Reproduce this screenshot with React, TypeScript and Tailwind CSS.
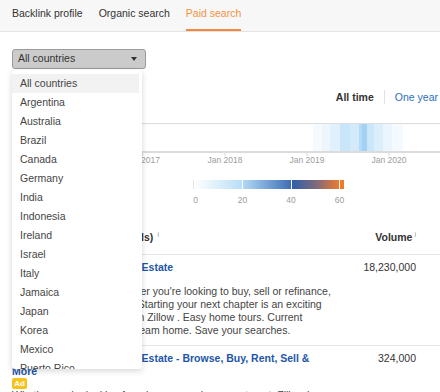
const tabs = ["Backlink profile", "Organic search", "Paid search"];

const countries = [
  "All countries",
  "Argentina",
  "Australia",
  "Brazil",
  "Canada",
  "Germany",
  "India",
  "Indonesia",
  "Ireland",
  "Israel",
  "Italy",
  "Jamaica",
  "Japan",
  "Korea",
  "Mexico",
  "Puerto Rico",
  "Spain",
  "United Kingdom",
];

// heatmap stripes: [x1, x2, colour], page coordinates
const stripes: [number, number, string][] = [
  [313, 322, "#f5fafe"],
  [322, 330, "#edf6fd"],
  [330, 340, "#e0f0fc"],
  [340, 350, "#c9e5f9"],
  [350, 359, "#d3eafa"],
  [359, 362, "#b3daf6"],
  [362, 367, "#a2d1f3"],
  [367, 374, "#cbe6f9"],
  [374, 383, "#dbeefb"],
  [383, 392, "#eaf5fd"],
  [392, 403, "#f5fafe"],
];

const years = [
  { x: 142.5, label: "Jan 2017" },
  { x: 225, label: "Jan 2018" },
  { x: 307, label: "Jan 2019" },
  { x: 389, label: "Jan 2020" },
];

function AdBadge() {
  return (
    <div className="flex h-[11px] w-[15px] items-center justify-center rounded-[2px] bg-[#f6c21c] text-[8px] font-bold leading-none text-white">
      Ad
    </div>
  );
}

export default function App() {
  return (
    <div className="relative h-[392px] w-[440px] overflow-hidden bg-white font-['Liberation_Sans',Arial,sans-serif] text-[#333]">
      <div className="flex h-[32px] gap-4 border-b border-[#e4e4e4] bg-[#f7f7f7] px-3 text-[10.5px]">
        {tabs.map((t) => (
          <div
            key={t}
            className={
              t === "Paid search"
                ? "h-[31px] border-b-2 border-[#f5883a] pt-[6px] leading-[14px] text-[#f5923e]"
                : "h-[31px] border-b-2 border-transparent pt-[6px] leading-[14px] text-[#333]"
            }
          >
            {t}
          </div>
        ))}
      </div>

      <div className="ml-3 mt-[17px] flex h-[20px] w-[134px] items-center justify-between rounded-[3px] border border-[#9b9b9b] bg-[#cbcbcb] pl-[5px] pr-[8px] text-[10.5px] text-[#333]">
        <span>All countries</span>
        <svg width="6" height="4" viewBox="0 0 6 4">
          <path d="M0 0h6L3 4z" fill="#333" />
        </svg>
      </div>

      <div className="mt-[21px] flex h-[14px] items-center justify-end pr-[2px] text-[10.5px] leading-[14px]">
        <span className="font-bold text-[#333]">All time</span>
        <span className="mx-[10px] h-[14px] w-px bg-[#e2e2e2]" />
        <span className="text-[#2e6fc0]">One year</span>
      </div>

      <svg className="mt-[19px] block" width="440" height="44">
        <rect x="12" y="0" width="428" height="1.2" fill="#dedede" />
        {stripes.map(([a, b, c]) => (
          <rect key={a} x={a} y="1" width={b - a} height="27" fill={c} />
        ))}
        <rect x="12" y="28" width="428" height="2" fill="#dcdcdc" />
        {years.map((y) => (
          <g key={y.label}>
            <line x1={y.x} x2={y.x} y1="30" y2="33" stroke="#d6d6d6" />
            <text
              x={y.x}
              y="40"
              textAnchor="middle"
              fontSize="8.5"
              fill="#9d9d9d"
            >
              {y.label}
            </text>
          </g>
        ))}
      </svg>

      <svg className="ml-[190px] mt-[13px] block" width="160" height="26">
        <defs>
          <linearGradient id="g1" x1="0" x2="1" y1="0" y2="0">
            <stop offset="0" stopColor="#ffffff" />
            <stop offset="1" stopColor="#b9def7" />
          </linearGradient>
          <linearGradient id="g2" x1="0" x2="1" y1="0" y2="0">
            <stop offset="0" stopColor="#b1d9f6" />
            <stop offset="1" stopColor="#3d6eb5" />
          </linearGradient>
          <linearGradient id="g3" x1="0" x2="1" y1="0" y2="0">
            <stop offset="0" stopColor="#2f5fa8" />
            <stop offset="0.5" stopColor="#7a6a80" />
            <stop offset="1" stopColor="#ee7a2e" />
          </linearGradient>
        </defs>
        <rect x="3" y="0" width="1" height="9" fill="#e4e4e4" />
        <rect x="4" y="0" width="48" height="9" fill="url(#g1)" />
        <rect x="53" y="0" width="48" height="9" fill="url(#g2)" />
        <rect x="102" y="0" width="47" height="9" fill="url(#g3)" />
        <rect x="150" y="0" width="4" height="9" fill="#f27a22" />
        {[
          [5.5, "0"],
          [52.5, "20"],
          [101, "40"],
          [149.5, "60"],
        ].map(([x, l]) => (
          <text
            key={l}
            x={x}
            y="23"
            textAnchor="middle"
            fontSize="8.5"
            fill="#9d9d9d"
          >
            {l}
          </text>
        ))}
      </svg>

      <div className="ml-3 mt-[16px] w-[428px] text-[10.5px]">
        <div className="flex h-[33px] items-center border-b border-[#e6e6e6] font-bold">
          <div className="w-[322px] pl-[13px]">
            Ads (sorted by keywords)
            <span className="relative -top-[4px] ml-[4px] text-[7px] font-normal text-[#999]">
              i
            </span>
          </div>
          <div className="flex-1 pr-[24px] text-right">
            Volume
            <span className="relative -top-[4px] ml-[2px] text-[7px] font-normal text-[#999]">
              i
            </span>
          </div>
        </div>

        <div className="flex border-b border-[#e6e6e6] pb-[8px] pt-[6px]">
          <div className="w-[322px]">
            <div className="indent-[3px] font-bold leading-[13px] text-[#1d56a8]">
              Zillow: Buy Home &amp; Real Estate
            </div>
            <AdBadge />
            <div className="whitespace-nowrap leading-[13px] text-[#444]">
              <div className="indent-[3px]">
                Zillow can help you. Whether you're looking to buy, sell or refinance,
              </div>
              <div className="indent-[10px]">
                so we've got you sorted. Starting your next chapter is an exciting
              </div>
              <div className="indent-[12px]">
                time. Start your search on Zillow . Easy home tours. Current
              </div>
              <div>listings &amp; more. Get your dream home. Save your searches.</div>
            </div>
          </div>
          <div className="flex-1 pr-[24px] text-right leading-[13px]">
            18,230,000
          </div>
        </div>

        <div className="flex pt-[6px]">
          <div className="w-[322px]">
            <div className="indent-[3px] font-bold leading-[13px] text-[#1d56a8]">
              Zillow: Buy Home &amp; Real Estate - Browse, Buy, Rent, Sell &amp; More
            </div>
            <AdBadge />
            <div className="leading-[13px] text-[#444]">
              Whether you're looking for a house, condo or apartment, Zillow has the most listings.
            </div>
          </div>
          <div className="flex-1 pr-[24px] text-right leading-[13px]">
            324,000
          </div>
        </div>
      </div>

      <div className="absolute left-[12px] top-[70px] h-[299px] w-[130px] overflow-hidden rounded-[3px] bg-white pt-[4px] text-[10.5px] text-[#454545] shadow-[0_2px_6px_rgba(0,0,0,0.16)]">
        {countries.map((c, i) => (
          <div
            key={c}
            className={
              i === 0
                ? "mr-[3px] h-[19px] bg-[#f2f2f2] pl-[8px] leading-[19px]"
                : "mr-[3px] h-[19px] pl-[8px] leading-[19px]"
            }
          >
            {c}
          </div>
        ))}
      </div>
    </div>
  );
}
